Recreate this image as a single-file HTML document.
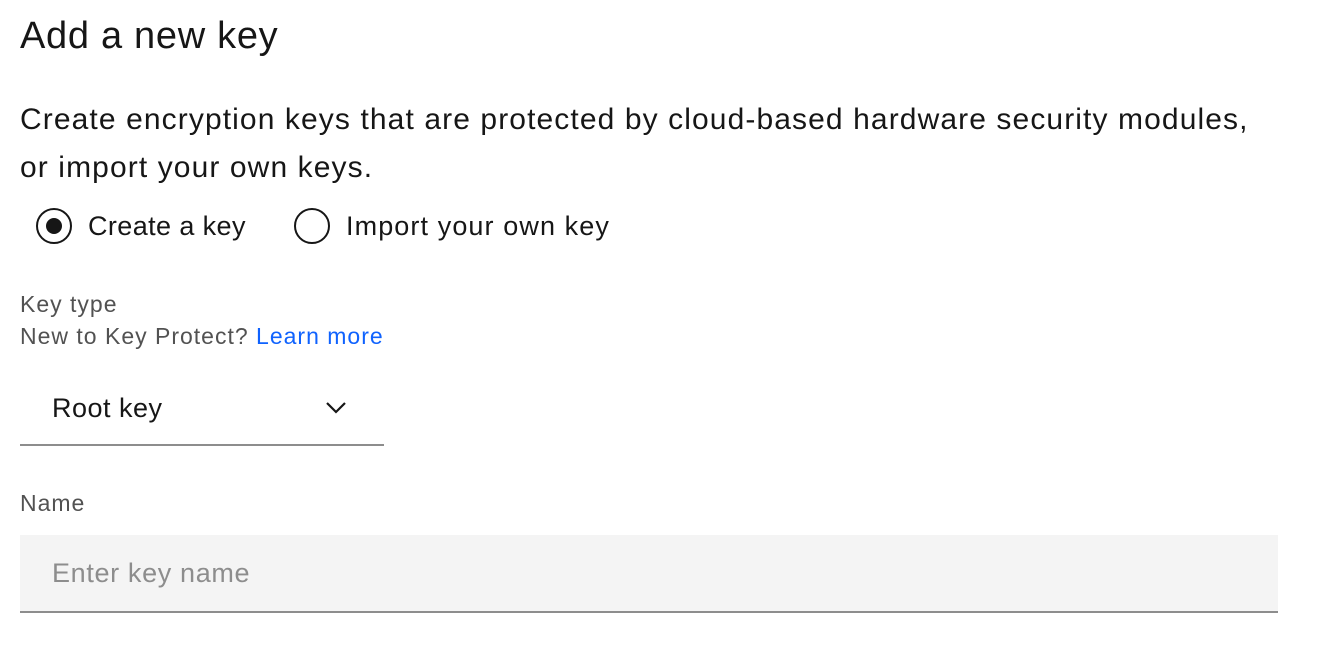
<!DOCTYPE html>
<html><head><meta charset="utf-8"><style>
html,body{margin:0;padding:0;background:#fff;width:1328px;height:666px;overflow:hidden;font-family:"Liberation Sans",sans-serif;color:#161616}
.a{position:absolute;white-space:nowrap}
</style></head><body>
<div class="a" style="left:20px;top:12px;font-size:38px;line-height:48px;letter-spacing:0.7px">Add a new key</div>
<div class="a" style="left:20px;top:96px;font-size:30px;line-height:48px;letter-spacing:1.1px">Create encryption keys that are protected by cloud-based hardware security modules,<br>or import your own keys.</div>
<div class="a" style="left:36px;top:208px;width:32px;height:32px;border:2px solid #161616;border-radius:50%"></div>
<div class="a" style="left:46px;top:218px;width:16px;height:16px;background:#161616;border-radius:50%"></div>
<div class="a" style="left:88px;top:208px;font-size:27px;line-height:36px;letter-spacing:0.4px">Create a key</div>
<div class="a" style="left:294px;top:208px;width:32px;height:32px;border:2px solid #161616;border-radius:50%"></div>
<div class="a" style="left:346px;top:208px;font-size:27px;line-height:36px;letter-spacing:1.1px">Import your own key</div>
<div class="a" style="left:20px;top:288px;font-size:23px;line-height:32px;color:#525252;letter-spacing:1px">Key type</div>
<div class="a" style="left:20px;top:320px;font-size:23px;line-height:32px;color:#525252;letter-spacing:1px">New to Key Protect? <span style="color:#0f62fe">Learn more</span></div>
<div class="a" style="left:52px;top:390px;font-size:27px;line-height:36px;letter-spacing:0.5px">Root key</div>
<svg class="a" style="left:324px;top:396px" width="24" height="24" viewBox="0 0 24 24"><path d="M3 7 L12 16 L21 7" fill="none" stroke="#161616" stroke-width="2.2"/></svg>
<div class="a" style="left:20px;top:444px;width:364px;height:2px;background:#8d8d8d"></div>
<div class="a" style="left:20px;top:487px;font-size:23px;line-height:32px;color:#525252;letter-spacing:1px">Name</div>
<div class="a" style="left:20px;top:535px;width:1258px;height:76px;background:#f4f4f4;border-bottom:2px solid #8d8d8d"></div>
<div class="a" style="left:52px;top:555px;font-size:27px;line-height:36px;color:#8d8d8d;letter-spacing:0.65px">Enter key name</div>
</body></html>
